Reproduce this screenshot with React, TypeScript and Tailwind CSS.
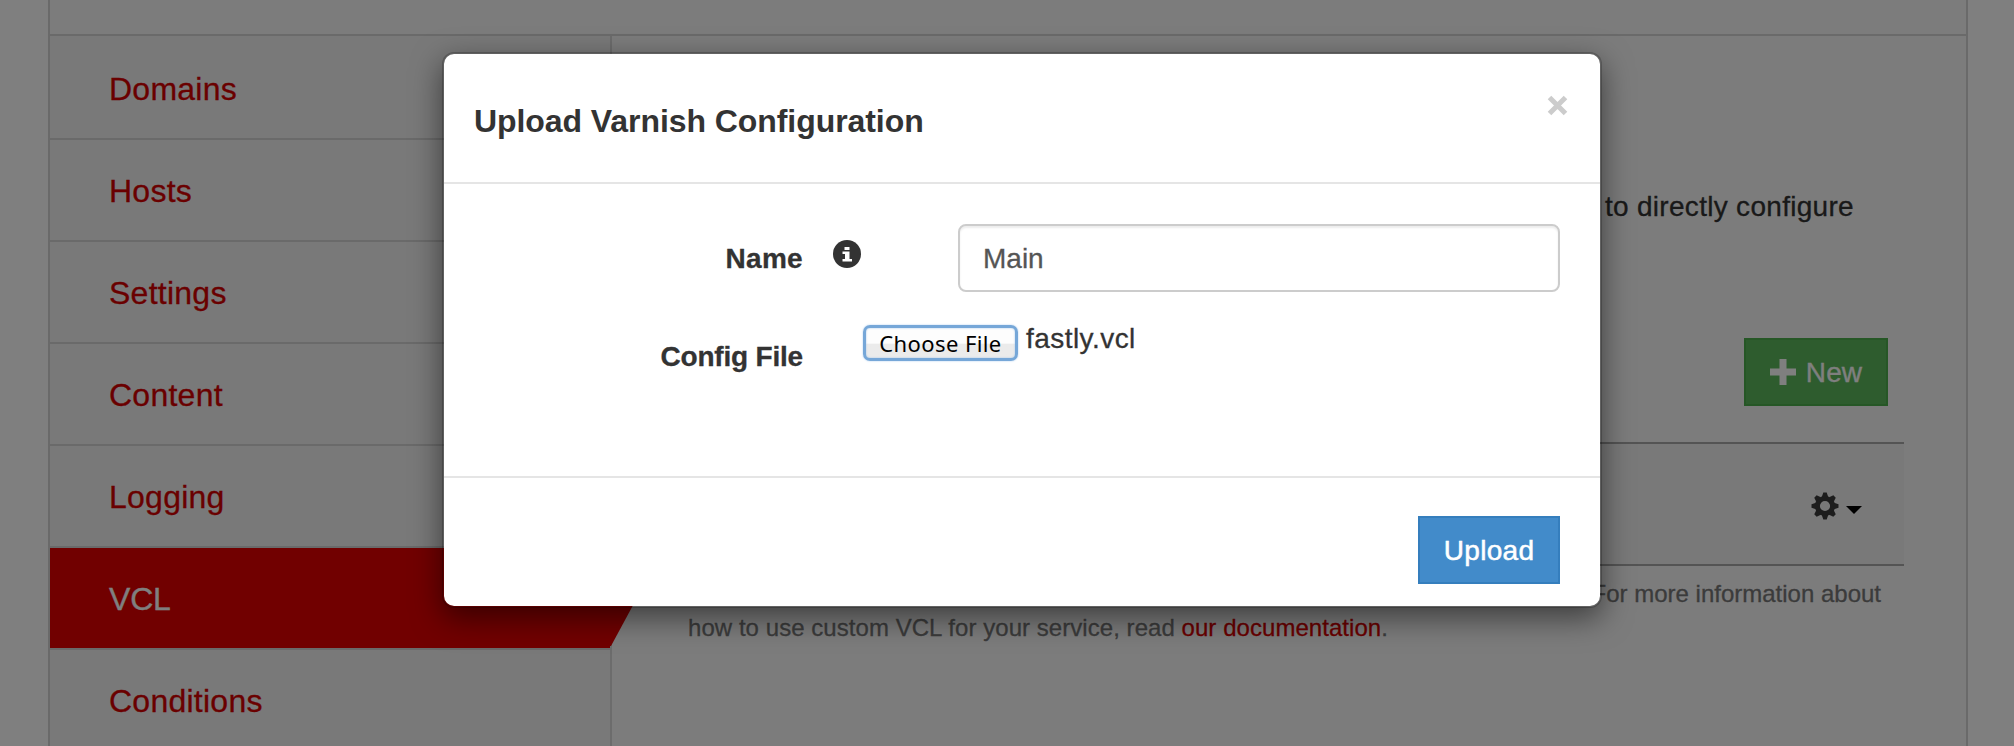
import React from "react";

const navItems = ["Domains", "Hosts", "Settings", "Content", "Logging", "VCL", "Conditions"];
const toothAngles = [0, 45, 90, 135, 180, 225, 270, 315];

function Sidebar() {
  return (
    <nav className="w-[562px] shrink-0 border-r-2 border-[#d8d8d8] bg-[#f2f2f2] pt-[2px] text-[32px] leading-[46px] tracking-[0.25px] [-webkit-text-stroke:0.3px]">
      {navItems.map((label) =>
        label === "VCL" ? (
          <div key={label} className="relative h-[102px] border-b-2 border-[#d5d5d5]">
            <div className="flex h-[100px] items-center bg-[#e20000] pl-[59px] text-white">
              <span className="mt-[2px] tracking-[-0.2px]">{label}</span>
            </div>
            <svg className="absolute left-[560px] top-0" width="28" height="100" viewBox="0 0 28 100">
              <path d="M0 0H1L28 48L1 98H0Z" fill="#e20000" />
            </svg>
          </div>
        ) : (
          <div key={label} className="flex h-[102px] items-center border-b-2 border-[#d5d5d5] pl-[59px] text-[#d40000]">
            <span className="mt-[2px]">{label}</span>
          </div>
        )
      )}
    </nav>
  );
}

function GearIcon() {
  return (
    <svg className="mt-[3px]" width="28" height="28" viewBox="-14 -14 28 28">
      <circle r="7.6" fill="none" stroke="#3a3a3a" strokeWidth="5" />
      {toothAngles.map((angle) => (
        <path key={angle} d="M-3.2 -9L-1.7 -13.5H1.7L3.2 -9Z" fill="#3a3a3a" transform={`rotate(${angle})`} />
      ))}
    </svg>
  );
}

function Content() {
  return (
    <main className="flex w-[1354px] flex-col pl-[76px] [-webkit-text-stroke:0.3px]">
      <p className="mt-[151px] w-[1166px] text-right text-[28px] leading-[40px] tracking-[0.3px] text-[#333]">
        to directly configure
      </p>
      <div className="mt-[111px] flex w-[1200px] justify-end">
        <button className="flex h-[68px] w-[144px] items-center justify-center gap-[10px] border-2 border-[#4cae4c] bg-[#5cb85c] text-[28px] leading-[40px] text-white">
          <svg width="26" height="26" viewBox="0 0 26 26" fill="currentColor">
            <path d="M9.5 0h7v9.5H26v7h-9.5V26h-7v-9.5H0v-7h9.5z" />
          </svg>
          <span className="mt-[2px] tracking-[0.1px]">New</span>
        </button>
      </div>
      <div className="mt-[36px] flex h-[124px] w-[1216px] items-center justify-end gap-[7px] border-y-2 border-[#a8a8a8] bg-[#f2f2f2] pr-[42px]">
        <GearIcon />
        <svg className="mt-[12px]" width="16" height="8" viewBox="0 0 16 8">
          <path d="M0 0h16L8 8z" fill="#000" />
        </svg>
      </div>
      <div className="mt-[11px] text-[24px] leading-[34px] text-[#777]">
        <p className="w-[1193px] text-right">For more information about</p>
        <p className="tracking-[0.05px]">
          how to use custom VCL for your service, read <a className="text-[#d40000]">our documentation</a>.
        </p>
      </div>
    </main>
  );
}

function Modal() {
  return (
    <section className="absolute left-[442px] top-[52px] flex h-[556px] w-[1160px] flex-col rounded-[12px] border-2 border-black/20 bg-white bg-clip-padding text-[#333] shadow-[0_10px_30px_rgba(0,0,0,0.5)]">
      <header className="flex h-[130px] shrink-0 justify-between border-b-2 border-[#e5e5e5] pl-[30px] pr-[30px]">
        <h4 className="pt-[44px] text-[32px] font-bold leading-[46px] tracking-[-0.07px]">
          Upload Varnish Configuration
        </h4>
        <svg className="mt-[41px]" width="25" height="21" viewBox="0 0 25 21">
          <path d="M4.5 2.5L20.5 18.5M20.5 2.5L4.5 18.5" stroke="#ccc" strokeWidth="5" />
        </svg>
      </header>
      <div className="flex h-[292px] shrink-0 flex-col pt-[40px] [-webkit-text-stroke:0.3px]">
        <div className="flex h-[68px]">
          <span className="w-[359px] pt-[15px] text-right text-[28px] font-bold leading-[40px] tracking-[0.3px]">
            Name
          </span>
          <svg className="ml-[30px] mt-[16px]" width="28" height="28" viewBox="0 0 28 28">
            <circle cx="14" cy="14" r="14" fill="#333" />
            <path d="M11.5 7h5v3h-5zM9.5 11.5h7v7.5h2.5v2.5H9.5V19h2.5v-5H9.5z" fill="#fff" />
          </svg>
          <input
            readOnly
            value="Main"
            className="ml-[97px] h-[68px] w-[602px] rounded-[8px] border-2 border-[#ccc] px-[23px] pt-[2px] text-[28px] text-[#555] shadow-[inset_0_2px_2px_rgba(0,0,0,0.075)] outline-none"
          />
        </div>
        <div className="mt-[30px] flex">
          <span className="w-[359px] pt-[15px] text-right text-[28px] font-bold leading-[40px] tracking-[-0.2px]">
            Config File
          </span>
          <button className="ml-[60px] mt-[3px] h-[36px] w-[155px] rounded-[7px] border-[3px] border-[#76a7d8] bg-linear-to-b from-[#fdfdfd] from-50% to-[#ebebeb] to-55% font-['Noto_Sans',sans-serif] text-[22px] leading-[30px] tracking-[0.4px] text-black shadow-[inset_0_0_2px_#9cc3ea,0_0_2px_#a9cbee] [-webkit-text-stroke:0px]">
            Choose File
          </button>
          <span className="ml-[8px] text-[28px] leading-[34px] tracking-[0.45px]">fastly.vcl</span>
        </div>
      </div>
      <footer className="flex h-[130px] shrink-0 justify-end border-t-2 border-[#e5e5e5] pr-[40px] pt-[38px]">
        <button className="h-[68px] w-[142px] border-2 border-[#357ebd] bg-[#428bca] pt-[2px] text-[28px] tracking-[0.3px] text-white [-webkit-text-stroke:0.5px]">
          Upload
        </button>
      </footer>
    </section>
  );
}

export default function App() {
  return (
    <div className="relative h-[746px] w-[2014px] overflow-hidden bg-white font-['Liberation_Sans',sans-serif]">
      <div className="ml-[48px] flex h-[746px] w-[1920px] flex-col border-x-2 border-[#d5d5d5] bg-[#f9f9f9]">
        <div className="h-[36px] shrink-0 border-b-2 border-[#d5d5d5]" />
        <div className="flex h-[710px]">
          <Sidebar />
          <Content />
        </div>
      </div>
      <div className="absolute inset-0 bg-black/50" />
      <Modal />
    </div>
  );
}
